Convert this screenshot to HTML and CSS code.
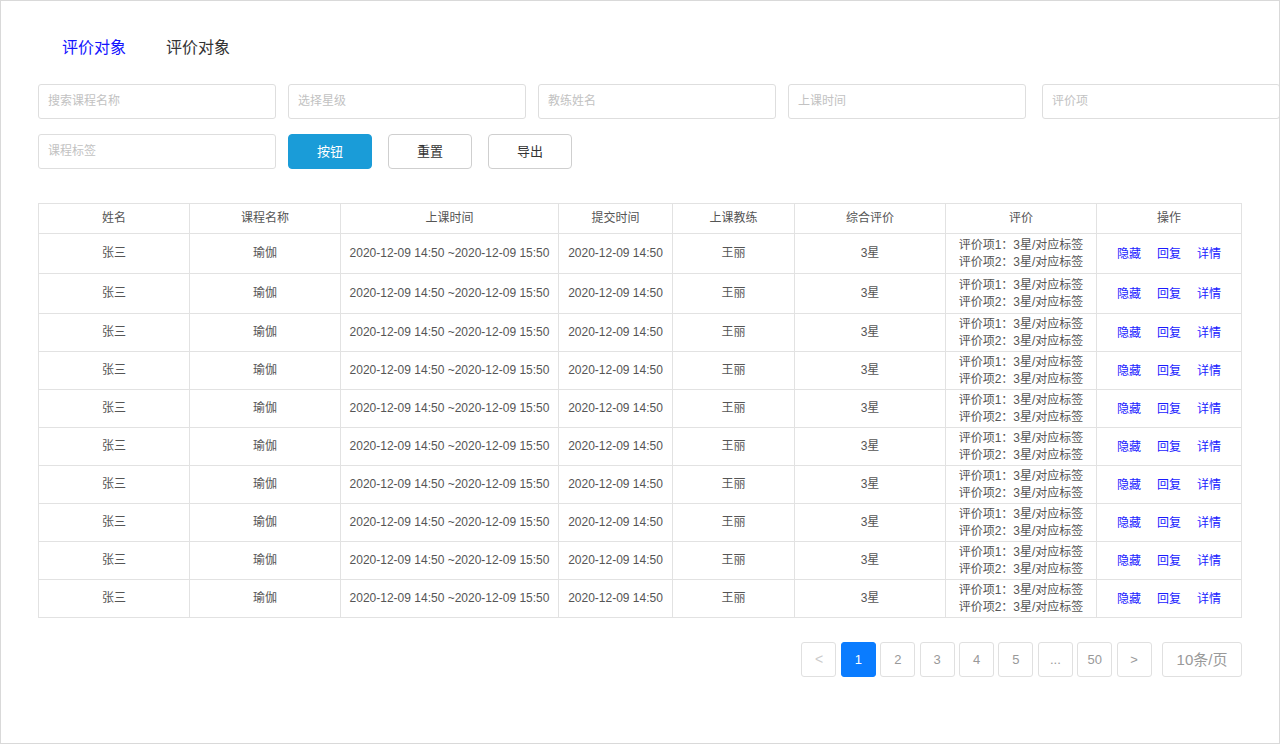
FILE: index.html
```html
<!DOCTYPE html>
<html lang="zh">
<head>
<meta charset="utf-8">
<title>评价对象</title>
<link rel="stylesheet" href="styles.css">
</head>
<body>
<div class="frame">
  <div class="tabs">
    <span class="tab active">评价对象</span>
    <span class="tab">评价对象</span>
  </div>
  <div class="filters">
    <div class="row">
      <div class="input">搜索课程名称</div>
      <div class="input">选择星级</div>
      <div class="input">教练姓名</div>
      <div class="input">上课时间</div>
      <div class="input last">评价项</div>
    </div>
    <div class="row">
      <div class="input">课程标签</div>
      <div class="btn primary">按钮</div>
      <div class="btn">重置</div>
      <div class="btn">导出</div>
    </div>
  </div>
  <table class="tbl">
    <colgroup>
      <col class="c1"><col class="c2"><col class="c3"><col class="c4"><col class="c5"><col class="c6"><col class="c7"><col class="c8">
    </colgroup>
    <thead>
      <tr><th>姓名</th><th>课程名称</th><th>上课时间</th><th>提交时间</th><th>上课教练</th><th>综合评价</th><th>评价</th><th>操作</th></tr>
    </thead>
    <tbody>
      <tr class="tall"><td>张三</td><td>瑜伽</td><td>2020-12-09 14:50 ~2020-12-09 15:50</td><td>2020-12-09 14:50</td><td>王丽</td><td>3星</td><td>评价项1：3星/对应标签<br>评价项2：3星/对应标签</td><td><span class="ops"><a>隐藏</a><a>回复</a><a>详情</a></span></td></tr>
      <tr class="tall"><td>张三</td><td>瑜伽</td><td>2020-12-09 14:50 ~2020-12-09 15:50</td><td>2020-12-09 14:50</td><td>王丽</td><td>3星</td><td>评价项1：3星/对应标签<br>评价项2：3星/对应标签</td><td><span class="ops"><a>隐藏</a><a>回复</a><a>详情</a></span></td></tr>
      <tr><td>张三</td><td>瑜伽</td><td>2020-12-09 14:50 ~2020-12-09 15:50</td><td>2020-12-09 14:50</td><td>王丽</td><td>3星</td><td>评价项1：3星/对应标签<br>评价项2：3星/对应标签</td><td><span class="ops"><a>隐藏</a><a>回复</a><a>详情</a></span></td></tr>
      <tr><td>张三</td><td>瑜伽</td><td>2020-12-09 14:50 ~2020-12-09 15:50</td><td>2020-12-09 14:50</td><td>王丽</td><td>3星</td><td>评价项1：3星/对应标签<br>评价项2：3星/对应标签</td><td><span class="ops"><a>隐藏</a><a>回复</a><a>详情</a></span></td></tr>
      <tr><td>张三</td><td>瑜伽</td><td>2020-12-09 14:50 ~2020-12-09 15:50</td><td>2020-12-09 14:50</td><td>王丽</td><td>3星</td><td>评价项1：3星/对应标签<br>评价项2：3星/对应标签</td><td><span class="ops"><a>隐藏</a><a>回复</a><a>详情</a></span></td></tr>
      <tr><td>张三</td><td>瑜伽</td><td>2020-12-09 14:50 ~2020-12-09 15:50</td><td>2020-12-09 14:50</td><td>王丽</td><td>3星</td><td>评价项1：3星/对应标签<br>评价项2：3星/对应标签</td><td><span class="ops"><a>隐藏</a><a>回复</a><a>详情</a></span></td></tr>
      <tr><td>张三</td><td>瑜伽</td><td>2020-12-09 14:50 ~2020-12-09 15:50</td><td>2020-12-09 14:50</td><td>王丽</td><td>3星</td><td>评价项1：3星/对应标签<br>评价项2：3星/对应标签</td><td><span class="ops"><a>隐藏</a><a>回复</a><a>详情</a></span></td></tr>
      <tr><td>张三</td><td>瑜伽</td><td>2020-12-09 14:50 ~2020-12-09 15:50</td><td>2020-12-09 14:50</td><td>王丽</td><td>3星</td><td>评价项1：3星/对应标签<br>评价项2：3星/对应标签</td><td><span class="ops"><a>隐藏</a><a>回复</a><a>详情</a></span></td></tr>
      <tr><td>张三</td><td>瑜伽</td><td>2020-12-09 14:50 ~2020-12-09 15:50</td><td>2020-12-09 14:50</td><td>王丽</td><td>3星</td><td>评价项1：3星/对应标签<br>评价项2：3星/对应标签</td><td><span class="ops"><a>隐藏</a><a>回复</a><a>详情</a></span></td></tr>
      <tr><td>张三</td><td>瑜伽</td><td>2020-12-09 14:50 ~2020-12-09 15:50</td><td>2020-12-09 14:50</td><td>王丽</td><td>3星</td><td>评价项1：3星/对应标签<br>评价项2：3星/对应标签</td><td><span class="ops"><a>隐藏</a><a>回复</a><a>详情</a></span></td></tr>
    </tbody>
  </table>
  <div class="pager">
    <span class="pg disabled">&lt;</span>
    <span class="pg current">1</span>
    <span class="pg">2</span>
    <span class="pg">3</span>
    <span class="pg">4</span>
    <span class="pg">5</span>
    <span class="pg">...</span>
    <span class="pg">50</span>
    <span class="pg">&gt;</span>
    <span class="size">10条/页</span>
  </div>
</div>
</body>
</html>
```
FILE: styles.css
```css
* { box-sizing: border-box; }
html, body { margin: 0; padding: 0; background: #fff; }
body {
  font-family: "Liberation Sans", Arial, "Noto Sans CJK SC", sans-serif;
  color: #555;
}
.frame {
  width: 1280px;
  height: 744px;
  border: 1px solid #d9d9d9;
  overflow: hidden;
  padding: 0 0 0 37px;
}
.tabs {
  display: flex;
  gap: 40px;
  padding: 37px 0 0 24px;
  height: 83px;
}
.tab {
  font-size: 16px;
  line-height: 20px;
  color: #333;
}
.tab.active { color: #1414ff; }
.filters { display: flex; flex-direction: column; gap: 15px; }
.row { display: flex; gap: 12px; white-space: nowrap; }
.input {
  flex: none;
  width: 238px;
  height: 35px;
  border: 1px solid #dedede;
  border-radius: 3px;
  padding: 0 9px;
  font-size: 12px;
  line-height: 33px;
  color: #c2c2c2;
}
.input.last { margin-left: 4px; }
.btn {
  flex: none;
  width: 84px;
  height: 35px;
  border: 1px solid #cfcfcf;
  border-radius: 4px;
  font-size: 13px;
  line-height: 33px;
  text-align: center;
  color: #333;
  margin-left: 4px;
}
.btn.primary {
  margin-left: 0;
  background: #1a9cd8;
  border-color: #1a9cd8;
  color: #fff;
}
.tbl {
  margin-top: 34px;
  width: 1204px;
  border-collapse: collapse;
  table-layout: fixed;
  font-size: 12px;
  color: #555;
}
.c1 { width: 151px; } .c2 { width: 151px; } .c3 { width: 218px; } .c4 { width: 114px; }
.c5 { width: 122px; } .c6 { width: 151px; } .c7 { width: 151px; } .c8 { width: 145px; }
.tbl th, .tbl td {
  border: 1px solid #e2e2e2;
  text-align: center;
  font-weight: normal;
  line-height: 17px;
  white-space: nowrap;
  padding: 0;
}
.tbl th { padding: 6px 0; }
.tbl td { padding: 1.5px 0; }
.tbl tr.tall td { padding: 2.5px 0; }
.ops { display: inline-flex; gap: 16px; padding-top: 1px; }
.ops a { color: #1a1aff; }
.pager {
  display: flex;
  justify-content: flex-end;
  width: 1204px;
  margin-top: 24px;
  gap: 4.4px;
}
.pg {
  width: 35px;
  height: 35px;
  border: 1px solid #e0e0e0;
  border-radius: 3px;
  font-size: 13px;
  line-height: 33px;
  text-align: center;
  color: #999;
}
.pg.disabled { color: #ccc; font-size: 14px; }
.pg.current { background: #0a7cff; border-color: #0a7cff; color: #fff; }
.size {
  margin-left: 6px;
  width: 80px;
  height: 35px;
  border: 1px solid #e0e0e0;
  border-radius: 3px;
  font-size: 15px;
  line-height: 33px;
  text-align: center;
  color: #999;
}
```
